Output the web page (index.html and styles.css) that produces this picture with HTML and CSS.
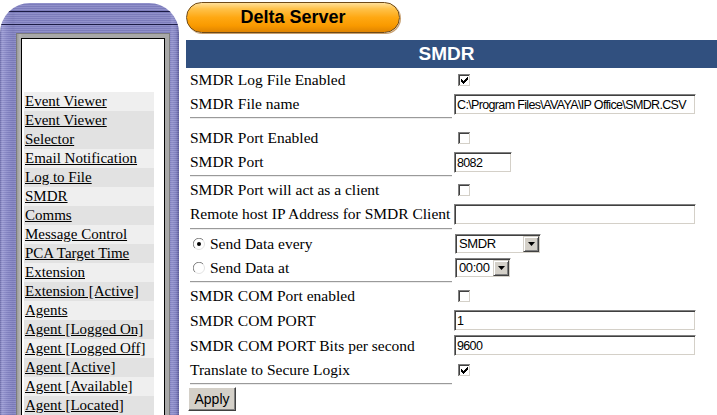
FILE: index.html
```html
<!DOCTYPE html>
<html>
<head>
<meta charset="utf-8">
<title>Delta Server - SMDR</title>
<link rel="stylesheet" href="styles.css">
</head>
<body>
<svg class="defs" aria-hidden="true">
  <symbol id="cb-off" viewBox="0 0 13 13">
    <path d="M0 0h12v1H1v11H0z" fill="#808080"/>
    <path d="M1 1h10v1H2v9H1z" fill="#404040"/>
    <path d="M12 0h1v13H0v-1h12z" fill="#ffffff"/>
    <path d="M11 1h1v11H1v-1h10z" fill="#d4d0c8"/>
    <rect x="2" y="2" width="9" height="9" fill="#ffffff"/>
  </symbol>
  <symbol id="cb-on" viewBox="0 0 13 13">
    <path d="M0 0h12v1H1v11H0z" fill="#808080"/>
    <path d="M1 1h10v1H2v9H1z" fill="#404040"/>
    <path d="M12 0h1v13H0v-1h12z" fill="#ffffff"/>
    <path d="M11 1h1v11H1v-1h10z" fill="#d4d0c8"/>
    <rect x="2" y="2" width="9" height="9" fill="#ffffff"/>
    <path transform="translate(3 3)" d="M0 2h1v1h1v1h1v-1h1v-1h1v-1h1v-1h1v3h-1v1h-1v1h-1v1h-1v1h-1v-1h-1v-1h-1z" fill="#000000"/>
  </symbol>
  <symbol id="rb-off" viewBox="0 0 12 12">
    <circle cx="6" cy="6" r="5.5" fill="#ffffff" stroke="#e2e2e2"/>
    <path d="M10.1 1.9A5.5 5.5 0 0 0 1.9 10.1" fill="none" stroke="#8a8a8a"/>
  </symbol>
  <symbol id="rb-on" viewBox="0 0 12 12">
    <circle cx="6" cy="6" r="5.5" fill="#ffffff" stroke="#e2e2e2"/>
    <path d="M10.1 1.9A5.5 5.5 0 0 0 1.9 10.1" fill="none" stroke="#8a8a8a"/>
    <circle cx="6" cy="6" r="2" fill="#000000"/>
  </symbol>
  <symbol id="arrow" viewBox="0 0 7 4">
    <path d="M0 0h7L3.5 4z" fill="#000000"/>
  </symbol>
</svg>

<div class="page">
  <aside class="sidebar">
    <div class="rails">
      <span class="rail"></span>
      <span class="rail"></span>
    </div>
    <div class="frame">
      <nav class="panel">
        <a class="item" href="#">Event Viewer</a>
        <a class="item" href="#">Event Viewer Selector</a>
        <a class="item" href="#">Email Notification</a>
        <a class="item" href="#">Log to File</a>
        <a class="item" href="#">SMDR</a>
        <a class="item" href="#">Comms</a>
        <a class="item" href="#">Message Control</a>
        <a class="item" href="#">PCA Target Time</a>
        <a class="item" href="#">Extension</a>
        <a class="item" href="#">Extension [Active]</a>
        <a class="item" href="#">Agents</a>
        <a class="item" href="#">Agent [Logged On]</a>
        <a class="item" href="#">Agent [Logged Off]</a>
        <a class="item" href="#">Agent [Active]</a>
        <a class="item" href="#">Agent [Available]</a>
        <a class="item" href="#">Agent [Located]</a>
      </nav>
    </div>
  </aside>

  <main class="main">
    <div class="pill">Delta Server</div>
    <div class="section-head">SMDR</div>

    <form class="form">
      <div class="label">SMDR Log File Enabled</div>
      <div class="value"><svg class="cb"><use href="#cb-on"/></svg></div>

      <div class="label">SMDR File name</div>
      <div class="value"><input class="field field-long" type="text" value="C:\Program Files\AVAYA\IP Office\SMDR.CSV"></div>

      <div class="sep sep-lg"><hr></div>

      <div class="label">SMDR Port Enabled</div>
      <div class="value"><svg class="cb"><use href="#cb-off"/></svg></div>

      <div class="label">SMDR Port</div>
      <div class="value"><input class="field field-short" type="text" value="8082"></div>

      <div class="sep sep-sm"><hr></div>

      <div class="label">SMDR Port will act as a client</div>
      <div class="value"><svg class="cb"><use href="#cb-off"/></svg></div>

      <div class="label">Remote host IP Address for SMDR Client</div>
      <div class="value"><input class="field field-long" type="text" value=""></div>

      <div class="sep sep-md"><hr></div>

      <div class="label radio-label"><svg class="rb"><use href="#rb-on"/></svg>Send Data every</div>
      <div class="value">
        <span class="dd dd-wide"><select class="dd-sel"><option>SMDR</option></select><span class="dd-btn"><svg class="dd-arrow"><use href="#arrow"/></svg></span></span>
      </div>

      <div class="label radio-label"><svg class="rb"><use href="#rb-off"/></svg>Send Data at</div>
      <div class="value">
        <span class="dd dd-narrow"><select class="dd-sel"><option>00:00</option></select><span class="dd-btn"><svg class="dd-arrow"><use href="#arrow"/></svg></span></span>
      </div>

      <div class="sep sep-sm"><hr></div>

      <div class="label">SMDR COM Port enabled</div>
      <div class="value"><svg class="cb"><use href="#cb-off"/></svg></div>

      <div class="label row-tall">SMDR COM PORT</div>
      <div class="value row-tall"><input class="field field-long" type="text" value="1"></div>

      <div class="label row-tall">SMDR COM PORT Bits per second</div>
      <div class="value row-tall"><input class="field field-long" type="text" value="9600"></div>

      <div class="label">Translate to Secure Logix</div>
      <div class="value"><svg class="cb"><use href="#cb-on"/></svg></div>

      <div class="sep sep-sm"><hr></div>

      <div class="actions"><button class="btn" type="button">Apply</button></div>
    </form>
  </main>
</div>
</body>
</html>
```

FILE: styles.css
```css
html, body {
  margin: 0;
  padding: 0;
  background: #ffffff;
  overflow: hidden;
}

body {
  font-family: "Liberation Serif", "Times New Roman", serif;
  color: #000;
}

.defs {
  display: block;
  width: 0;
  height: 0;
  overflow: hidden;
}

.page {
  display: flex;
  align-items: flex-start;
  gap: 7px;
  height: 415px;
}

/* ---------- sidebar ---------- */
.sidebar {
  width: 179px;
  flex: none;
  margin-top: 3px;
  height: 420px;
  border-radius: 30px 30px 0 0;
  overflow: hidden;
  display: flex;
  flex-direction: column;
  background:
    repeating-linear-gradient(to bottom, rgba(255,255,255,0.10) 0 1px, rgba(0,0,40,0.06) 1px 2px),
    linear-gradient(to right, #6c6cab 0, #9c9cd5 2px, #8a8ac9 7px, #7f7fbf 13px, #8484c4 16px, #8484c4 170px, #9494d0 172px, #8585c5 176px, #5f5f9c 179px);
}

.rails {
  display: flex;
  flex-direction: column;
  gap: 12px;
  padding-top: 8px;
}

.rail {
  display: block;
  height: 1px;
  background: #1b1b45;
}

.frame {
  margin: 8px 0 0 16px;
  width: 154px;
  flex: 1;
  box-sizing: border-box;
  padding: 4px;
  background: linear-gradient(to right, #9a9a9a, #b4b4b4 3px, #a8a8a8 5px);
  border: 1px solid #7c7c7c;
  border-bottom: 0;
  display: flex;
}

.panel {
  flex: 1;
  background: #ffffff;
  border: 1px solid #000;
  border-bottom: 0;
  padding: 53px 0 0 2px;
  display: flex;
  flex-direction: column;
  align-items: flex-start;
}

.item {
  display: block;
  width: 130px;
  box-sizing: border-box;
  padding-left: 1px;
  font-size: 15px;
  line-height: 19px;
  color: #000;
  text-decoration: underline;
  background: #efefef;
}

.item:nth-child(even) {
  background: #e2e2e2;
}

/* ---------- main ---------- */
.main {
  flex: 1;
  min-width: 0;
}

.pill {
  margin-top: 2px;
  width: 214px;
  height: 31px;
  box-sizing: border-box;
  border: 1px solid #6e4a18;
  border-radius: 16px;
  background: linear-gradient(to bottom, #ffe09a 0, #ffc24a 20%, #ffa812 50%, #f99a00 78%, #e08400 100%);
  font-family: "Liberation Sans", Arial, sans-serif;
  font-weight: bold;
  font-size: 18px;
  line-height: 29px;
  text-align: center;
  color: #000;
  box-shadow: 1px 1px 0 #c8a070;
}

.section-head {
  margin-top: 7px;
  height: 28px;
  background: #31507f;
  color: #fff;
  font-family: "Liberation Sans", Arial, sans-serif;
  font-weight: bold;
  font-size: 19px;
  line-height: 27px;
  text-align: center;
  padding-right: 10px;
}

.form {
  display: grid;
  grid-template-columns: 266px 1fr;
  margin: 0;
}

.label {
  grid-column: 1;
  height: 24px;
  display: flex;
  align-items: center;
  padding-left: 4px;
  font-size: 15.5px;
  white-space: nowrap;
}

.value {
  grid-column: 2;
  height: 24px;
  display: flex;
  align-items: center;
  padding-left: 2px;
}

.row-tall {
  height: 25px;
}

.sep {
  grid-column: 1 / -1;
  box-sizing: border-box;
  padding-top: 1px;
  height: 4px;
}

.sep-md { height: 6px; padding-top: 2px; }
.sep-lg { height: 10px; }

.sep hr {
  display: block;
  margin: 0 0 0 4px;
  width: 262px;
  height: 0;
  border: 0;
  border-top: 1px solid #9a9a9a;
  border-bottom: 1px solid #ececec;
}

.cb {
  width: 13px;
  height: 13px;
  margin-left: 4px;
  display: block;
}

.rb {
  width: 12px;
  height: 12px;
  margin: 0 5px 0 3px;
  flex: none;
}

.field {
  height: 21px;
  box-sizing: border-box;
  margin: 0;
  padding: 1px 2px 0;
  border: 1px solid;
  border-color: #808080 #ffffff #ffffff #808080;
  box-shadow: inset 1px 1px 0 #404040, inset -1px -1px 0 #d4d0c8;
  background: #fff;
  font-family: "Liberation Sans", Arial, sans-serif;
  font-size: 12.5px;
  letter-spacing: -0.65px;
  color: #000;
  outline: none;
}

.field-long { width: 242px; }
.field-short { width: 58px; }

.dd {
  display: inline-flex;
  align-items: center;
  height: 20px;
  box-sizing: border-box;
  margin-left: 1px;
  border: 1px solid;
  border-color: #808080 #ffffff #ffffff #808080;
  box-shadow: inset 1px 1px 0 #404040, inset -1px -1px 0 #d4d0c8;
  background: #fff;
  padding: 1px;
}

.dd-wide { width: 86px; }
.dd-narrow { width: 56px; }

.dd-sel {
  appearance: none;
  -webkit-appearance: none;
  flex: 1;
  min-width: 0;
  height: 16px;
  border: 0;
  margin: 0;
  padding: 0 0 0 2px;
  background: transparent;
  font-family: "Liberation Sans", Arial, sans-serif;
  font-size: 13px;
  letter-spacing: -0.4px;
  line-height: 16px;
  color: #000;
  outline: none;
}

.dd-btn {
  width: 16px;
  height: 16px;
  box-sizing: border-box;
  flex: none;
  display: flex;
  align-items: center;
  justify-content: center;
  background: #d4d0c8;
  border: 1px solid;
  border-color: #d4d0c8 #404040 #404040 #d4d0c8;
  box-shadow: inset 1px 1px 0 #ffffff, inset -1px -1px 0 #808080;
}

.dd-arrow {
  width: 7px;
  height: 4px;
  display: block;
}

.actions {
  grid-column: 1 / -1;
  padding-left: 2px;
  height: 26px;
  display: flex;
  align-items: center;
}

.btn {
  width: 48px;
  height: 24px;
  box-sizing: border-box;
  margin: 0;
  padding: 0;
  background: #d4d0c8;
  border: 1px solid;
  border-color: #ffffff #404040 #404040 #ffffff;
  box-shadow: inset -1px -1px 0 #808080;
  font-family: "Liberation Sans", Arial, sans-serif;
  font-size: 14px;
  color: #000;
}
```
